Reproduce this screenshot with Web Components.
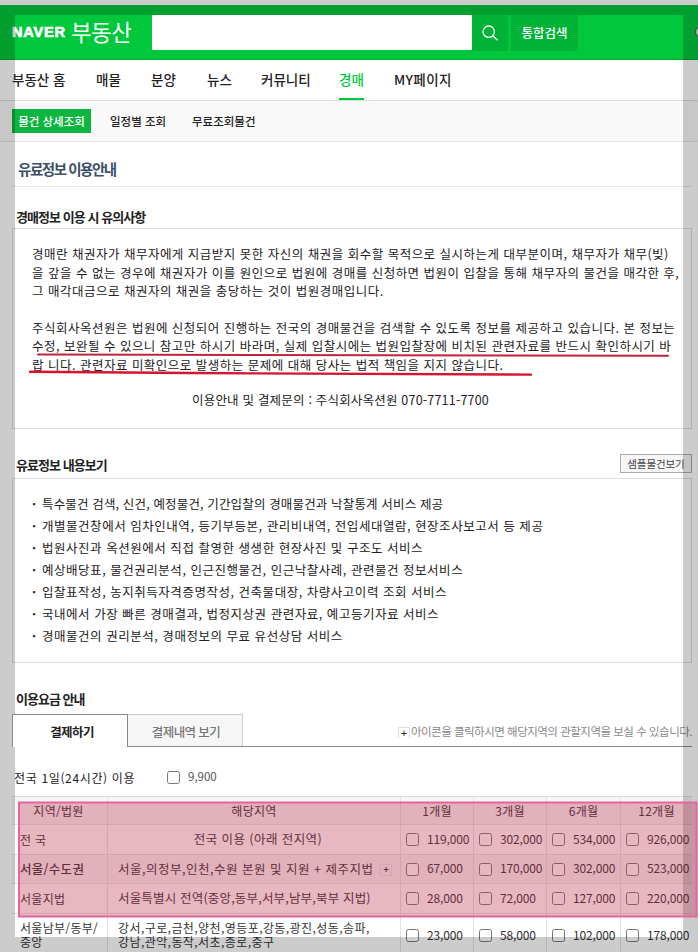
<!DOCTYPE html>
<html lang="ko"><head><meta charset="utf-8"><title>유료정보 이용안내</title>
<style>
html,body{margin:0;padding:0;background:#fff}
body{width:698px;height:952px;overflow:hidden;position:relative;padding-top:5px;box-sizing:border-box;font-family:"Noto Sans CJK KR","Noto Sans",sans-serif;color:#333}
main{display:block;padding:0 6px 0 12px}
</style></head><body>
<naver-header></naver-header>
<main-nav></main-nav>
<sub-nav></sub-nav>
<main>
<page-title>유료정보 이용안내</page-title>
<info-section heading="경매정보 이용 시 유의사항" top="21" lh="18" boxh="201" pad="16">
<notice-text></notice-text>
</info-section>
<info-section heading="유료정보 내용보기" top="29" lh="14" boxh="185" pad="14" action="샘플물건보기">
<service-list></service-list>
</info-section>
<fee-tabs></fee-tabs>
<day-pass></day-pass>
<price-table></price-table>
</main>
<focus-dim></focus-dim>
<ink-marks></ink-marks>
<script>
const def=(name,html)=>customElements.define(name,class extends HTMLElement{
  connectedCallback(){ if(this.shadowRoot)return; const s=this.attachShadow({mode:'open'}); s.innerHTML=typeof html==='function'?html(this):html; }
});
def('naver-header',`<style>
:host{display:flex;height:55px;background:#00c73c;border-bottom:1px solid #00a832;box-sizing:border-box;position:relative;padding:10px 0 0 12px;align-items:flex-start;color:#fff}
.logo{display:flex;align-items:center;height:35px;width:140px}
.n{font:900 14.5px/1 "Liberation Sans",Arial,sans-serif;-webkit-text-stroke:.7px #fff;letter-spacing:.85px;width:59px;white-space:nowrap}
.b{font:400 22.5px/1 "Noto Sans CJK KR",sans-serif;letter-spacing:-.6px;white-space:nowrap;position:relative;top:-1px}
.in{width:320px;height:35px;background:#fff}
.btn{width:36px;height:36px;background:#00b336;display:flex;align-items:center;justify-content:center}
.go{margin-left:3px;width:67px;height:36px;background:#00b336;display:flex;align-items:center;justify-content:center;font:500 12.5px/1 "Noto Sans CJK KR",sans-serif}
.dot{position:absolute;left:695px;top:22px;width:9px;height:10px;border-radius:50%;background:#ddd;border:1px solid #555;box-sizing:border-box}
</style><div class="logo"><span class="n">NAVER</span><span class="b">부동산</span></div><div class="in"></div>
<div class="btn"><svg width="18" height="18" viewBox="0 0 18 18" fill="none" stroke="#fff" stroke-width="1.3"><circle cx="7.7" cy="7.7" r="5.7"/><path d="M11.8 11.8 L16.5 16.3"/></svg></div>
<div class="go">통합검색</div><div class="dot"></div>`);
def('main-nav',`<style>
:host{display:flex;height:41px;border-bottom:1px solid #ddd;box-sizing:border-box;font:500 13.5px/39px "Noto Sans CJK KR",sans-serif;color:#222;background:#fff;padding-left:12px}
span{white-space:nowrap;position:relative;height:40px}
.on{color:#00c73c}.on::after{content:"";position:absolute;left:0;right:0;bottom:0;height:2px;background:#00c73c}
</style><span style="width:84px">부동산 홈</span><span style="width:55px">매물</span><span style="width:56px">분양</span><span style="width:54px">뉴스</span><span style="width:78px">커뮤니티</span><span class="on" style="width:25px">경매</span><span style="margin-left:30px;letter-spacing:.35px">MY페이지</span>`);
def('sub-nav',`<style>
:host{display:flex;height:41px;background:#f9f9f9;border-bottom:1px solid #e3e3e3;box-sizing:border-box;padding:8px 0 0 12px;font:500 11.5px/24px "Noto Sans CJK KR",sans-serif;color:#222}
span{white-space:nowrap}.on{background:#0db63f;color:#fff;width:79px;height:24px;text-align:center;margin-right:19px}
</style><span class="on">물건 상세조회</span><span style="width:82px">일정별 조회</span><span>무료조회물건</span>`);
def('page-title',`<style>
:host{display:block;height:45px;border-bottom:1px solid #e6e6e6;box-sizing:border-box;padding:16px 0 0 6px;font:700 14.5px/22px "Noto Sans CJK KR",sans-serif;color:#3a5068;letter-spacing:-1.45px}
</style><slot></slot>`);
def('info-section',h=>`<style>
:host{display:block;padding-top:${h.getAttribute('top')}px}
.h{display:flex;justify-content:space-between;align-items:flex-start;height:20px;padding-left:4px;font:700 13px/${h.getAttribute('lh')}px "Noto Sans CJK KR",sans-serif;color:#222;letter-spacing:-.95px}
.a{font:400 10.5px/17px "Noto Sans CJK KR",sans-serif;color:#444;border:1px solid #aaa;background:#f6f6f6;width:72px;height:19px;box-sizing:border-box;text-align:center;letter-spacing:-.1px;margin-top:-4px}
.box{border:1px solid #ddd;height:${h.getAttribute('boxh')}px;box-sizing:border-box;padding-top:${h.getAttribute('pad')}px}
</style><div class="h"><span>${h.getAttribute('heading')}</span>${h.hasAttribute('action')?`<span class="a">${h.getAttribute('action')}</span>`:''}</div><div class="box"><slot></slot></div>`);
def('notice-text',`<style>
:host{display:block;padding-left:19px;font:400 12.5px/18.5px "Noto Sans CJK KR",sans-serif;color:#222;letter-spacing:.49px;white-space:nowrap}
p{margin:0 0 18px}.c{text-align:center;padding-right:42px;margin:17px 0 0;letter-spacing:.2px}
</style><p>경매란 채권자가 채무자에게 지급받지 못한 자신의 채권을 회수할 목적으로 실시하는게 대부분이며, 채무자가 채무(빚)<br>을 갚을 수 없는 경우에 채권자가 이를 원인으로 법원에 경매를 신청하면 법원이 입찰을 통해 채무자의 물건을 매각한 후,<br>그 매각대금으로 채권자의 채권을 충당하는 것이 법원경매입니다.</p>
<p style="margin:0">주식회사옥션원은 법원에 신청되어 진행하는 전국의 경매물건을 검색할 수 있도록 정보를 제공하고 있습니다. 본 정보는<br>수정, 보완될 수 있으니 참고만 하시기 바라며, 실제 입찰시에는 법원입찰장에 비치된 관련자료를 반드시 확인하시기 바<br>랍 니다. 관련자료 미확인으로 발생하는 문제에 대해 당사는 법적 책임을 지지 않습니다.</p>
<p class="c">이용안내 및 결제문의 : 주식회사옥션원 070-7711-7700</p>`);
def('service-list',`<style>
:host{display:block;padding-left:19px;font:400 12.5px/22px "Noto Sans CJK KR",sans-serif;color:#222;letter-spacing:.53px;white-space:nowrap}
ul{list-style:none;margin:0;padding:0}li{display:flex;gap:6px}li::before{content:"·";width:4px;font-weight:700}
</style><ul><li style="letter-spacing:.15px">특수물건 검색, 신건, 예정물건, 기간입찰의 경매물건과 낙찰통계 서비스 제공</li><li>개별물건창에서 임차인내역, 등기부등본, 관리비내역, 전입세대열람, 현장조사보고서 등 제공</li><li>법원사진과 옥션원에서 직접 촬영한 생생한 현장사진 및 구조도 서비스</li><li>예상배당표, 물건권리분석, 인근진행물건, 인근낙찰사례, 관련물건 정보서비스</li><li>입찰표작성, 농지취득자격증명작성, 건축물대장, 차량사고이력 조회 서비스</li><li>국내에서 가장 빠른 경매결과, 법정지상권 관련자료, 예고등기자료 서비스</li><li>경매물건의 권리분석, 경매정보의 무료 유선상담 서비스</li></ul>`);
def('fee-tabs',`<style>
:host{display:block;padding-top:27px}
.h{height:24px;padding-left:4px;font:700 13px/18px "Noto Sans CJK KR",sans-serif;color:#222;letter-spacing:-1px}
.r{display:flex;height:33px;border-bottom:1px solid #888;box-sizing:border-box;align-items:stretch}
.t{width:116px;box-sizing:border-box;text-align:center;font:500 12.5px/33px "Noto Sans CJK KR",sans-serif;letter-spacing:-.6px;white-space:nowrap}
.a{border:1px solid #888;border-bottom:0;background:#fff;color:#222;height:33px;position:relative;z-index:1;padding-left:4px;font-weight:700}
.b{border:1px solid #ccc;border-left:0;border-bottom:0;background:#f6f6f6;color:#777;width:115px;padding-left:2px}
.n{margin-left:auto;display:flex;align-items:center;gap:1px;font:400 11.5px/1 "Noto Sans CJK KR",sans-serif;color:#888;letter-spacing:-.5px;white-space:nowrap;padding-top:4px}
.p{width:12px;height:11px;border:1px solid #ddd;border-bottom:0;box-sizing:border-box;color:#222;font:400 11px/10px "Liberation Sans",sans-serif;text-align:center;letter-spacing:0}
</style><div class="h">이용요금 안내</div><div class="r"><div class="t a">결제하기</div><div class="t b">결제내역 보기</div><div class="n"><span class="p">+</span><span>아이콘을 클릭하시면 해당지역의 관할지역을 보실 수 있습니다.</span></div></div>`);
def('day-pass',`<style>
:host{display:flex;align-items:center;height:49px;box-sizing:border-box;padding:12px 0 0 2px;font:400 12px/1 "Noto Sans CJK KR",sans-serif;color:#222;white-space:nowrap}
span.l{width:153px;letter-spacing:.65px}input{margin:0 8px 0 0;width:13px;height:13px}span.v{color:#555;font-size:11.5px;padding-bottom:1px}
</style><span class="l">전국 1일(24시간) 이용</span><input type="checkbox"><span class="v">9,900</span>`);
const rows=[
 [['전 국',''],'전국 이용 (아래 전지역)',['119,000','302,000','534,000','926,000'],'c',30,'padding-left:8px;font-size:12.5px;letter-spacing:.42px',''],
 [['서울/수도권','b'],'서울,의정부,인천,수원 본원 및 지원 + 제주지법 <i>+</i>',['67,000','170,000','302,000','523,000'],'',29,'font-size:12.5px;letter-spacing:.5px','s'],
 [['서울지법',''],'서울특별시 전역(중앙,동부,서부,남부,북부 지법)',['28,000','72,000','127,000','220,000'],'',30,'font-size:12.5px;letter-spacing:.18px',''],
 [['서울남부/동부/<br>중앙','t'],'강서,구로,금천,양천,영등포,강동,광진,성동,송파,<br>강남,관악,동작,서초,종로,중구',['23,000','58,000','102,000','178,000'],'t',44,'','']
];
def('price-table',`<style>
:host{display:block;font:400 12px/1 "Noto Sans CJK KR",sans-serif;color:#333;white-space:nowrap}
.g{display:grid;grid-template-columns:95px 293px 73px 73px 74px 72px;border-top:1px solid #ddd}
.c{border-bottom:1px solid #e2e2e2;border-left:1px solid #e2e2e2;display:flex;align-items:center;box-sizing:border-box}
.c.x{border-left:0;padding-left:8px}
.s{background:#f6f6f6}
.hd{justify-content:center;height:28px;letter-spacing:.3px;padding-top:1px;background:#f6f6f6}
.hd.x{padding-left:0;padding-right:2px}
.r{padding-left:10px;letter-spacing:.42px}.r.m{justify-content:center;padding-left:0}
.b{font-weight:500;font-size:12.5px;letter-spacing:.3px!important}
.two{line-height:14px}
.two span{position:relative;top:-.5px}
.pr{padding-left:5px;gap:8px;letter-spacing:-.15px}
.pr span{position:relative;top:-1px}
input{margin:0;width:13px;height:13px;flex:none}
i{font:700 9px/11px "Liberation Sans",sans-serif;display:inline-block;width:12px;height:12px;border:1px solid #e6e6e6;box-sizing:border-box;text-align:center;margin-left:3px;vertical-align:1px}
</style><div class="g"><div class="c x hd">지역/법원</div><div class="c hd">해당지역</div><div class="c hd">1개월</div><div class="c hd">3개월</div><div class="c hd">6개월</div><div class="c hd">12개월</div>
${rows.map(r=>`<div class="c x ${r[6]} ${r[0][1]==='b'?'b':''} ${r[0][1]==='t'?'two':''}" style="height:${r[4]}px;letter-spacing:.3px"><span>${r[0][0]}</span></div><div class="c r ${r[6]} ${r[3]==='c'?'m':''} ${r[3]==='t'?'two':''}" style="height:${r[4]}px;${r[5]}"><span>${r[1]}</span></div>${r[2].map(p=>`<div class="c pr ${r[6]}" style="height:${r[4]}px"><input type="checkbox"><span>${p}</span></div>`).join('')}`).join('')}</div>`);
def('focus-dim',`<style>
:host{display:block;position:absolute;left:15px;top:15px;width:668px;height:922px;box-shadow:0 0 0 1200px rgba(0,0,0,.2);pointer-events:none}
</style>`);
def('ink-marks',`<style>
:host{display:block;position:absolute;left:0;top:0;width:698px;height:952px;pointer-events:none}
svg{display:block}
</style><svg width="698" height="952" viewBox="0 0 698 952" fill="none">
<rect x="19" y="802.5" width="677.5" height="114" fill="rgba(185,45,75,.34)" stroke="#e2659f" stroke-width="2"/>
<path d="M38 354.6 L668 355.8" stroke="#c0233c" stroke-width="2" stroke-linecap="round"/>
<path d="M30 371.8 C200 373.5 400 374 531 374.6" stroke="#d4162e" stroke-width="2.4" stroke-linecap="round"/>
</svg>`);
</script>
</body></html>
